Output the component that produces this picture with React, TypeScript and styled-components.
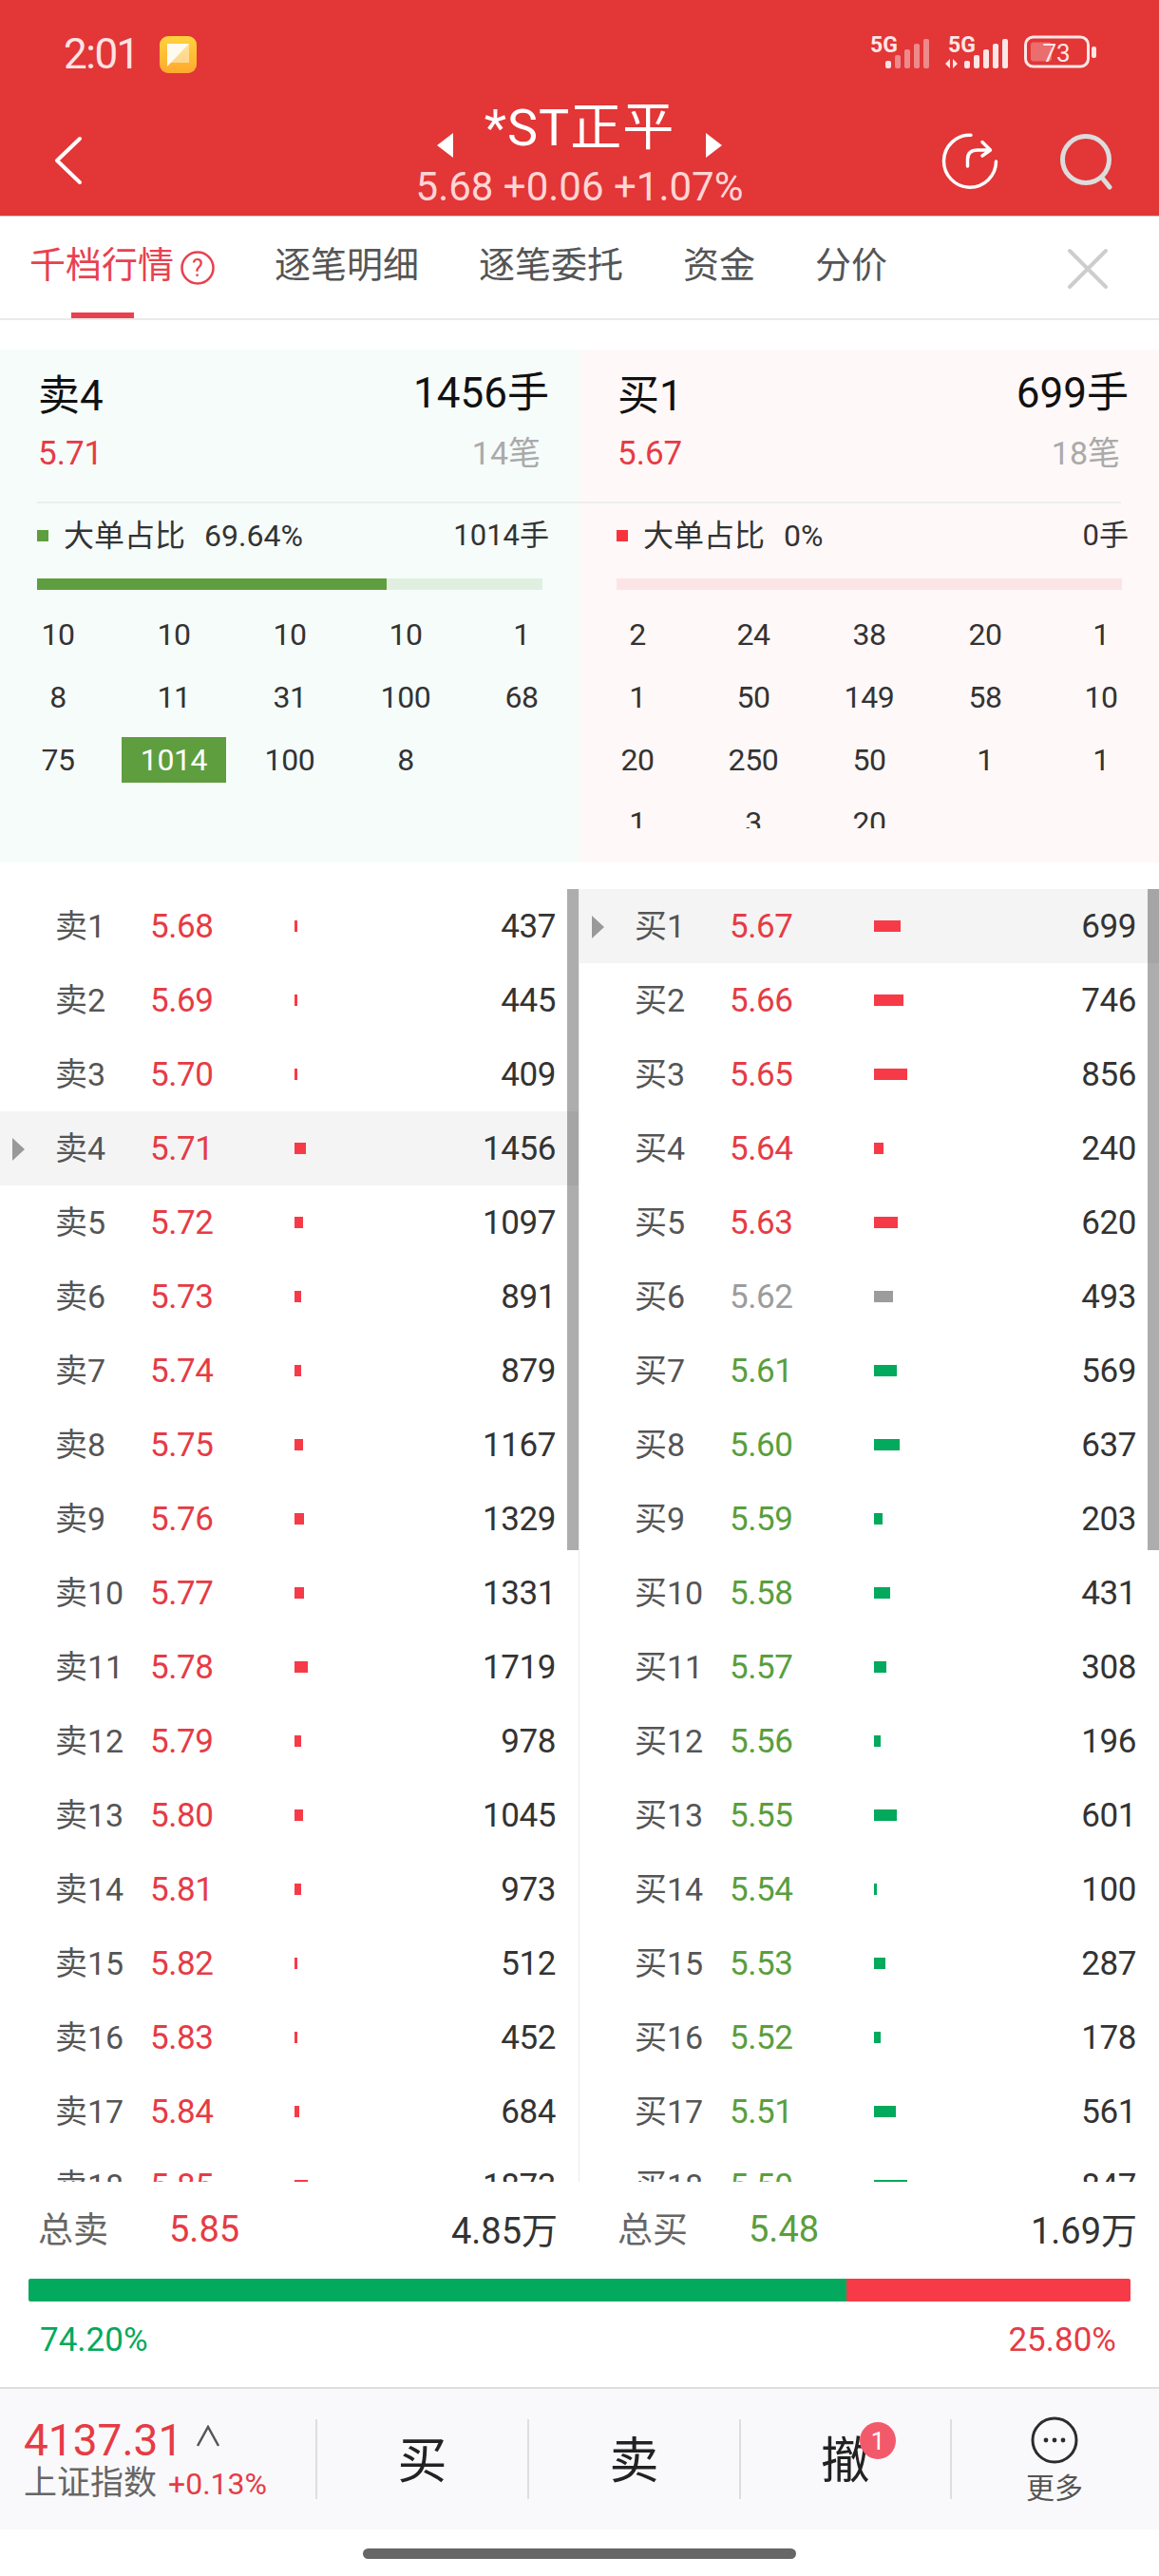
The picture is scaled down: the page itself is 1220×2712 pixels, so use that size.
import React from "react";
import styled, { createGlobalStyle } from "styled-components";

const FONT = `Roboto, "Noto Sans CJK SC", sans-serif`;
const RED = "#e63b45";
const GREEN = "#5a9e3e";
const BAR_RED = "#f73a47";
const BAR_GREEN = "#03a95c";
const GREY = "#9c9c9c";

const Global = createGlobalStyle`
  html, body { margin: 0; padding: 0; background: #fff; }
  * { box-sizing: border-box; }
`;

const Page = styled.div`
  width: 1220px;
  height: 2712px;
  overflow: hidden;
  background: #fff;
  font-family: ${FONT};
  color: #333;
`;

const Header = styled.header`
  height: 228px;
  background: #e23637;
  border-bottom: 1px solid #c9c9c9;
`;

const StatusBar = styled.div`
  height: 100px;
  padding: 35px 66px 0 67px;
  display: flex;
  justify-content: space-between;
  align-items: flex-start;
`;

const StatusLeft = styled.div`
  display: flex;
  align-items: center;
  gap: 22px;
  height: 44px;
`;

const Clock = styled.span`
  font-size: 44px;
  letter-spacing: -1.5px;
  line-height: 44px;
  color: #ffe3e3;
`;

const StatusRight = styled.div`
  display: flex;
  align-items: flex-start;
  gap: 14px;
  padding-top: 2px;
  svg {
    overflow: visible;
  }
`;

const NavBar = styled.div`
  display: grid;
  grid-template-columns: 1fr auto 1fr;
  height: 127px;
`;

const NavLeft = styled.div`
  padding: 43px 0 0 57px;
`;

const NavRight = styled.div`
  display: flex;
  justify-content: flex-end;
  gap: 65px;
  padding: 40px 44px 0 0;
`;

const TitleBlock = styled.div`
  display: flex;
  flex-direction: column;
  align-items: center;
`;

const TitleRow = styled.div`
  display: flex;
  align-items: center;
  gap: 32px;
  height: 66px;
  padding-top: 8px;
`;

const TriBox = styled.div`
  display: flex;
  margin-top: 32px;
`;

const Title = styled.div`
  font-size: 54px;
  line-height: 60px;
  color: #fff;
  margin-top: -4px;
  letter-spacing: 1px;
`;

const Quote = styled.div`
  font-size: 42px;
  line-height: 48px;
  color: #ffd5d5;
  margin-top: 7px;
`;

const Tabs = styled.nav`
  height: 109px;
  border-bottom: 2px solid #eaeaea;
  padding: 0 0 0 31px;
  display: flex;
  align-items: flex-start;
  gap: 63px;
  position: relative;
`;

const Tab = styled.div<{ $active?: boolean }>`
  position: relative;
  height: 107px;
  padding-top: 27px;
  font-size: 38px;
  line-height: 48px;
  color: ${(p) => (p.$active ? "#e8414f" : "#555")};
  display: flex;
  gap: 7px;
  &::after {
    content: "";
    display: ${(p) => (p.$active ? "block" : "none")};
    position: absolute;
    left: 44px;
    bottom: 0;
    width: 66px;
    height: 6px;
    background: #e8414f;
  }
`;

const CloseBtn = styled.div`
  position: absolute;
  right: 53px;
  top: 33px;
  width: 44px;
  height: 44px;
`;

const Panels = styled.section`
  margin-top: 31px;
  height: 540px;
  display: grid;
  grid-template-columns: 610px 610px;
`;

const Panel = styled.div<{ $buy?: boolean }>`
  background: ${(p) => (p.$buy ? "#fef8f8" : "#f6fcfa")};
  overflow: hidden;
`;

const PanelHead = styled.div`
  height: 160px;
  padding-left: 40px;
  display: flex;
  flex-direction: column;
`;

const HeadRow = styled.div`
  display: flex;
  justify-content: space-between;
  align-items: flex-start;
  padding-right: 32px;
`;

const HeadTitle = styled.div`
  height: 76px;
  padding-top: 15px;
  font-size: 44px;
  line-height: 68px;
  color: #111;
`;

const HeadVol = styled.div`
  height: 76px;
  padding-top: 12px;
  font-size: 44px;
  line-height: 68px;
  color: #111;
`;

const HeadPrice = styled.div`
  font-size: 35px;
  line-height: 46px;
  margin-top: 11px;
  color: ${RED};
`;

const HeadCount = styled.div`
  font-size: 34px;
  line-height: 46px;
  margin: 10px 9px 0 0;
  color: #aaa;
`;

const Divider = styled.div<{ $buy?: boolean }>`
  height: 2px;
  background: #eeeeee;
  margin: ${(p) => (p.$buy ? "0 40px 0 0" : "0 0 0 39px")};
`;

const LargeRow = styled.div`
  height: 68px;
  padding: 0 32px 0 39px;
  display: flex;
  align-items: center;
`;

const LargeDot = styled.span<{ $buy?: boolean }>`
  width: 12px;
  height: 12px;
  background: ${(p) => (p.$buy ? "#f7323c" : "#5f9e3f")};
  margin-right: 16px;
`;

const LargeLabel = styled.span`
  font-size: 32px;
  color: #333;
  margin-right: 20px;
  line-height: 40px;
`;

const LargePct = styled.span`
  font-size: 32px;
  color: #333;
  line-height: 40px;
`;

const LargeVol = styled.span`
  margin-left: auto;
  font-size: 31px;
  color: #333;
  line-height: 40px;
`;

const Track = styled.div<{ $buy?: boolean }>`
  height: 12px;
  margin: 11px 39px 0 39px;
  background: ${(p) => (p.$buy ? "#fce4e6" : "#e1efe0")};
`;

const Fill = styled.div<{ $pct: number }>`
  height: 100%;
  width: ${(p) => p.$pct}%;
  background: #5f9e3f;
`;

const TickClip = styled.div`
  height: 237px;
  margin-top: 14px;
  overflow: hidden;
`;

const TickGrid = styled.div`
  display: grid;
  grid-template-columns: repeat(5, 122px);
  grid-auto-rows: 66px;
`;

const Tick = styled.div`
  display: flex;
  align-items: center;
  justify-content: center;
  font-size: 32px;
  letter-spacing: -0.4px;
  color: #333;
`;

const TickMark = styled.span`
  width: 110px;
  height: 48px;
  background: #5f9e3f;
  color: #fff;
  display: flex;
  align-items: center;
  justify-content: center;
`;

const Book = styled.section`
  margin-top: 28px;
  height: 1361px;
  display: grid;
  grid-template-columns: 610px 610px;
  overflow: hidden;
`;

const Column = styled.div<{ $sep?: boolean }>`
  position: relative;
  height: 1361px;
  overflow: hidden;
  border-right: ${(p) => (p.$sep ? "1px solid #ececec" : "none")};
`;

const ScrollThumb = styled.div`
  position: absolute;
  top: 0;
  right: 0;
  width: 12px;
  height: 696px;
  background: rgba(0, 0, 0, 0.32);
`;

const Row = styled.div<{ $on?: boolean }>`
  position: relative;
  height: 78px;
  padding: 0 24px 0 58px;
  display: grid;
  grid-template-columns: 100px 152px 1fr auto;
  align-items: center;
  background: ${(p) => (p.$on ? "#f4f4f4" : "transparent")};
`;

const Caret = styled.span`
  position: absolute;
  left: 13px;
  top: 28px;
  width: 0;
  height: 0;
  border-left: 13px solid #999;
  border-top: 12px solid transparent;
  border-bottom: 12px solid transparent;
`;

const RowLabel = styled.span`
  font-size: 34px;
  color: #555;
  white-space: nowrap;
  padding-bottom: 5px;
`;

const RowPrice = styled.span<{ $c: string }>`
  font-size: 35px;
  letter-spacing: -0.4px;
  color: ${(p) => p.$c};
`;

const RowBar = styled.span<{ $w: number; $c: string }>`
  display: block;
  height: 12px;
  width: ${(p) => p.$w}px;
  background: ${(p) => p.$c};
`;

const RowQty = styled.span`
  font-size: 35px;
  letter-spacing: -0.4px;
  color: #333;
  text-align: right;
`;

const Summary = styled.section`
  height: 96px;
  display: grid;
  grid-template-columns: 610px 610px;
`;

const SumSide = styled.div`
  padding: 0 23px 0 40px;
  display: grid;
  grid-template-columns: 138px 1fr auto;
  align-items: center;
`;

const SumLabel = styled.span`
  font-size: 37px;
  color: #666;
`;

const SumPrice = styled.span<{ $c: string }>`
  font-size: 38px;
  padding-top: 4px;
  color: ${(p) => p.$c};
`;

const SumTotal = styled.span`
  font-size: 38px;
  color: #333;
`;

const Ratio = styled.div`
  height: 24px;
  margin: 6px 30px 0;
  display: flex;
  border-radius: 2px;
  overflow: hidden;
`;

const RatioPart = styled.div<{ $w: number; $c: string }>`
  width: ${(p) => p.$w}px;
  background: ${(p) => p.$c};
`;

const Percents = styled.div`
  height: 90px;
  padding: 0 45px 10px 42px;
  display: flex;
  justify-content: space-between;
  align-items: center;
`;

const Pct = styled.span<{ $c: string }>`
  font-size: 35px;
  color: ${(p) => p.$c};
`;

const BottomBar = styled.footer`
  height: 150px;
  background: #f9f9fb;
  border-top: 2px solid #dedede;
  display: grid;
  grid-template-columns: 332px 223px 223px 222px 220px;
  align-items: start;
  padding-top: 32px;
`;

const IndexBlock = styled.div`
  padding-left: 25px;
  margin-top: -2px;
`;

const IndexTop = styled.div`
  display: flex;
  align-items: center;
  gap: 14px;
  height: 48px;
  font-size: 46px;
  color: ${RED};
`;

const ChevronBox = styled.span`
  display: flex;
  margin-top: -8px;
`;

const IndexBottom = styled.div`
  display: flex;
  align-items: baseline;
  gap: 12px;
`;

const IndexName = styled.span`
  font-size: 35px;
  color: #666;
  line-height: 44px;
`;

const IndexChange = styled.span`
  font-size: 32px;
  color: ${RED};
`;

const Action = styled.div`
  position: relative;
  height: 84px;
  padding-bottom: 5px;
  border-left: 2px solid #dedede;
  display: flex;
  align-items: center;
  justify-content: center;
  font-size: 52px;
  color: #222;
`;

const Badge = styled.span`
  position: absolute;
  left: 125px;
  top: 3px;
  width: 38px;
  height: 39px;
  border-radius: 50%;
  background: #f25a6b;
  color: #fff;
  font-size: 26px;
  display: flex;
  align-items: center;
  justify-content: center;
`;

const More = styled.div`
  height: 84px;
  border-left: 2px solid #dedede;
  padding-right: 2px;
  display: flex;
  flex-direction: column;
  align-items: center;
  svg {
    margin-top: -3px;
    flex: none;
  }
`;

const MoreLabel = styled.span`
  font-size: 30px;
  color: #555;
  line-height: 36px;
  margin-top: 8px;
  flex: none;
`;

const HomeArea = styled.div`
  height: 49px;
  padding-top: 20px;
  display: flex;
  justify-content: center;
`;

const HomeBar = styled.div`
  width: 456px;
  height: 11px;
  border-radius: 6px;
  background: #666;
`;

/* ---------- icons ---------- */

const Sim = ({ dim, arrows }: { dim?: boolean; arrows?: boolean }) => {
  const heights = [8, 14, 20, 26, 31];
  const xs = arrows ? [20, 30, 40, 50, 60] : [16, 26, 36, 46, 56];
  return (
    <svg width={arrows ? 69 : 65} height="36" viewBox={arrows ? "0 0 69 36" : "0 0 65 36"}>
      <text x={arrows ? 3 : 0} y="18" fontFamily="Roboto, sans-serif" fontWeight="700" fontSize="23" fill="#ffe6e6">5G</text>
      {arrows && <path d="M6 25 L1 30 L6 35Z M9 25 L14 30 L9 35Z" fill="#ffe6e6" transform="translate(-1 0)" />}
      {heights.map((h, i) => (
        <rect key={i} x={xs[i]} y={35 - h} width="6" height={h} rx="2" fill="#fff" opacity={dim ? (i === 0 ? 0.85 : 0.42) : 0.88} />
      ))}
    </svg>
  );
};

const Battery = () => (
  <svg width="76" height="36" viewBox="0 0 76 36">
    <rect x="1.5" y="2" width="66" height="31" rx="8" fill="none" stroke="#ffe6e6" strokeWidth="3" />
    <rect x="7" y="7.5" width="22" height="20" rx="3" fill="#fff" opacity="0.28" />
    <text x="34" y="28" textAnchor="middle" fontFamily="Roboto, sans-serif" fontSize="26" fill="#ffe6e6">73</text>
    <rect x="71" y="12" width="5" height="12" rx="2" fill="#ffe6e6" />
  </svg>
);

const NoteIcon = () => (
  <svg width="39" height="39" viewBox="0 0 39 39">
    <defs>
      <linearGradient id="noteG" x1="0" y1="0" x2="0" y2="1">
        <stop offset="0" stopColor="#ffd23f" />
        <stop offset="1" stopColor="#ffa92e" />
      </linearGradient>
    </defs>
    <rect width="39" height="39" rx="9" fill="url(#noteG)" />
    <rect x="8" y="8" width="23" height="20" fill="#fff" opacity="0.45" />
    <path d="M8 8 H31 L8 32Z" fill="#fffaf0" />
  </svg>
);

const Back = () => (
  <svg width="30" height="52" viewBox="0 0 30 52">
    <path d="M27 3 L3 26 L27 49" fill="none" stroke="#fff" strokeWidth="4" strokeLinecap="round" strokeLinejoin="round" />
  </svg>
);

const ShareIcon = () => (
  <svg width="60" height="60" viewBox="0 0 60 60">
    <path d="M31 2.2 A27.5 27.5 0 1 0 57.5 30" fill="none" stroke="#fff" strokeWidth="3.5" strokeLinecap="round" />
    <path d="M27.5 35 V28 Q27.5 18 38 18 H51 M43 9.5 L51.5 18 L43 24" fill="none" stroke="#fff" strokeWidth="3.5" strokeLinecap="round" strokeLinejoin="round" />
  </svg>
);

const SearchIcon = () => (
  <svg width="60" height="60" viewBox="0 0 60 60">
    <circle cx="27" cy="28" r="24.5" fill="none" stroke="#dcdcdc" strokeWidth="5" />
    <path d="M44 47 L52 57" fill="none" stroke="#dcdcdc" strokeWidth="5" strokeLinecap="round" />
  </svg>
);

const Tri = ({ right }: { right?: boolean }) => (
  <TriBox>
    <svg width="19" height="26" viewBox="0 0 19 26">
      <path d={right ? "M1 0 L18 13 L1 26Z" : "M18 0 L1 13 L18 26Z"} fill="#fff" />
    </svg>
  </TriBox>
);

const HelpIcon = () => (
  <svg width="36" height="46" viewBox="0 0 36 46">
    <circle cx="18" cy="27" r="16.5" fill="none" stroke="#e8414f" strokeWidth="2.5" />
    <text x="18" y="36" textAnchor="middle" fontFamily="Roboto, sans-serif" fontSize="25" fill="#e8414f">?</text>
  </svg>
);

const CloseIcon = () => (
  <svg width="44" height="44" viewBox="0 0 44 44">
    <path d="M3 3 L41 41 M41 3 L3 41" stroke="#cdcdcd" strokeWidth="4" strokeLinecap="round" />
  </svg>
);

const Chevron = () => (
  <ChevronBox>
    <svg width="26" height="24" viewBox="0 0 26 24">
      <path d="M2 22 L13 2 L24 22" fill="none" stroke="#555" strokeWidth="2.5" />
    </svg>
  </ChevronBox>
);

const MoreIcon = () => (
  <svg width="50" height="50" viewBox="0 0 50 50">
    <circle cx="25" cy="25" r="23" fill="none" stroke="#2c2c2c" strokeWidth="3" />
    <circle cx="16" cy="25" r="2.4" fill="#2c2c2c" />
    <circle cx="25" cy="25" r="2.4" fill="#2c2c2c" />
    <circle cx="34" cy="25" r="2.4" fill="#2c2c2c" />
  </svg>
);

/* ---------- data ---------- */

const sellQty = [437, 445, 409, 1456, 1097, 891, 879, 1167, 1329, 1331, 1719, 978, 1045, 973, 512, 452, 684, 1873];
const sellBar = [3, 3, 3, 12, 9, 7, 7, 9, 10, 10, 14, 7, 9, 7, 3, 3, 5, 14];
const buyQty = [699, 746, 856, 240, 620, 493, 569, 637, 203, 431, 308, 196, 601, 100, 287, 178, 561, 847];
const buyBar = [28, 31, 35, 10, 25, 20, 24, 27, 9, 17, 13, 7, 24, 3, 12, 7, 23, 35];

const sellTicks = [10, 10, 10, 10, 1, 8, 11, 31, 100, 68, 75, 1014, 100, 8];
const buyTicks = [2, 24, 38, 20, 1, 1, 50, 149, 58, 10, 20, 250, 50, 1, 1, 1, 3, 20];

const buyColors = (i: number) => {
  if (i < 5) return { text: RED, bar: BAR_RED };
  if (i === 5) return { text: GREY, bar: GREY };
  return { text: GREEN, bar: BAR_GREEN };
};

export default function App() {
  return (
    <Page>
      <Global />
      <Header>
        <StatusBar>
          <StatusLeft>
            <Clock>2:01</Clock>
            <NoteIcon />
          </StatusLeft>
          <StatusRight>
            <Sim dim />
            <Sim arrows />
            <Battery />
          </StatusRight>
        </StatusBar>
        <NavBar>
          <NavLeft>
            <Back />
          </NavLeft>
          <TitleBlock>
            <TitleRow>
              <Tri />
              <Title>*ST正平</Title>
              <Tri right />
            </TitleRow>
            <Quote>5.68 +0.06 +1.07%</Quote>
          </TitleBlock>
          <NavRight>
            <ShareIcon />
            <SearchIcon />
          </NavRight>
        </NavBar>
      </Header>

      <Tabs>
        <Tab $active>
          千档行情
          <HelpIcon />
        </Tab>
        <Tab>逐笔明细</Tab>
        <Tab>逐笔委托</Tab>
        <Tab>资金</Tab>
        <Tab>分价</Tab>
        <CloseBtn>
          <CloseIcon />
        </CloseBtn>
      </Tabs>

      <Panels>
        <Panel>
          <PanelHead>
            <HeadRow>
              <HeadTitle>卖4</HeadTitle>
              <HeadVol>1456手</HeadVol>
            </HeadRow>
            <HeadRow>
              <HeadPrice>5.71</HeadPrice>
              <HeadCount>14笔</HeadCount>
            </HeadRow>
          </PanelHead>
          <Divider />
          <LargeRow>
            <LargeDot />
            <LargeLabel>大单占比</LargeLabel>
            <LargePct>69.64%</LargePct>
            <LargeVol>1014手</LargeVol>
          </LargeRow>
          <Track>
            <Fill $pct={69.2} />
          </Track>
          <TickClip>
            <TickGrid>
              {sellTicks.map((t, i) => (
                <Tick key={i}>{t === 1014 ? <TickMark>{t}</TickMark> : t}</Tick>
              ))}
            </TickGrid>
          </TickClip>
        </Panel>
        <Panel $buy>
          <PanelHead>
            <HeadRow>
              <HeadTitle>买1</HeadTitle>
              <HeadVol>699手</HeadVol>
            </HeadRow>
            <HeadRow>
              <HeadPrice>5.67</HeadPrice>
              <HeadCount>18笔</HeadCount>
            </HeadRow>
          </PanelHead>
          <Divider $buy />
          <LargeRow>
            <LargeDot $buy />
            <LargeLabel>大单占比</LargeLabel>
            <LargePct>0%</LargePct>
            <LargeVol>0手</LargeVol>
          </LargeRow>
          <Track $buy />
          <TickClip>
            <TickGrid>
              {buyTicks.map((t, i) => (
                <Tick key={i}>{t}</Tick>
              ))}
            </TickGrid>
          </TickClip>
        </Panel>
      </Panels>

      <Book>
        <Column $sep>
          {sellQty.map((q, i) => (
            <Row key={i} $on={i === 3}>
              {i === 3 && <Caret />}
              <RowLabel>卖{i + 1}</RowLabel>
              <RowPrice $c={RED}>{(5.68 + i * 0.01).toFixed(2)}</RowPrice>
              <RowBar $w={sellBar[i]} $c={BAR_RED} />
              <RowQty>{q}</RowQty>
            </Row>
          ))}
          <ScrollThumb />
        </Column>
        <Column>
          {buyQty.map((q, i) => {
            const c = buyColors(i);
            return (
              <Row key={i} $on={i === 0}>
                {i === 0 && <Caret />}
                <RowLabel>买{i + 1}</RowLabel>
                <RowPrice $c={c.text}>{(5.67 - i * 0.01).toFixed(2)}</RowPrice>
                <RowBar $w={buyBar[i]} $c={c.bar} />
                <RowQty>{q}</RowQty>
              </Row>
            );
          })}
          <ScrollThumb />
        </Column>
      </Book>

      <Summary>
        <SumSide>
          <SumLabel>总卖</SumLabel>
          <SumPrice $c={RED}>5.85</SumPrice>
          <SumTotal>4.85万</SumTotal>
        </SumSide>
        <SumSide>
          <SumLabel>总买</SumLabel>
          <SumPrice $c={GREEN}>5.48</SumPrice>
          <SumTotal>1.69万</SumTotal>
        </SumSide>
      </Summary>
      <Ratio>
        <RatioPart $w={861} $c={BAR_GREEN} />
        <RatioPart $w={299} $c={BAR_RED} />
      </Ratio>
      <Percents>
        <Pct $c={BAR_GREEN}>74.20%</Pct>
        <Pct $c={RED}>25.80%</Pct>
      </Percents>

      <BottomBar>
        <IndexBlock>
          <IndexTop>
            4137.31
            <Chevron />
          </IndexTop>
          <IndexBottom>
            <IndexName>上证指数</IndexName>
            <IndexChange>+0.13%</IndexChange>
          </IndexBottom>
        </IndexBlock>
        <Action>买</Action>
        <Action>卖</Action>
        <Action>
          撤<Badge>1</Badge>
        </Action>
        <More>
          <MoreIcon />
          <MoreLabel>更多</MoreLabel>
        </More>
      </BottomBar>
      <HomeArea>
        <HomeBar />
      </HomeArea>
    </Page>
  );
}
